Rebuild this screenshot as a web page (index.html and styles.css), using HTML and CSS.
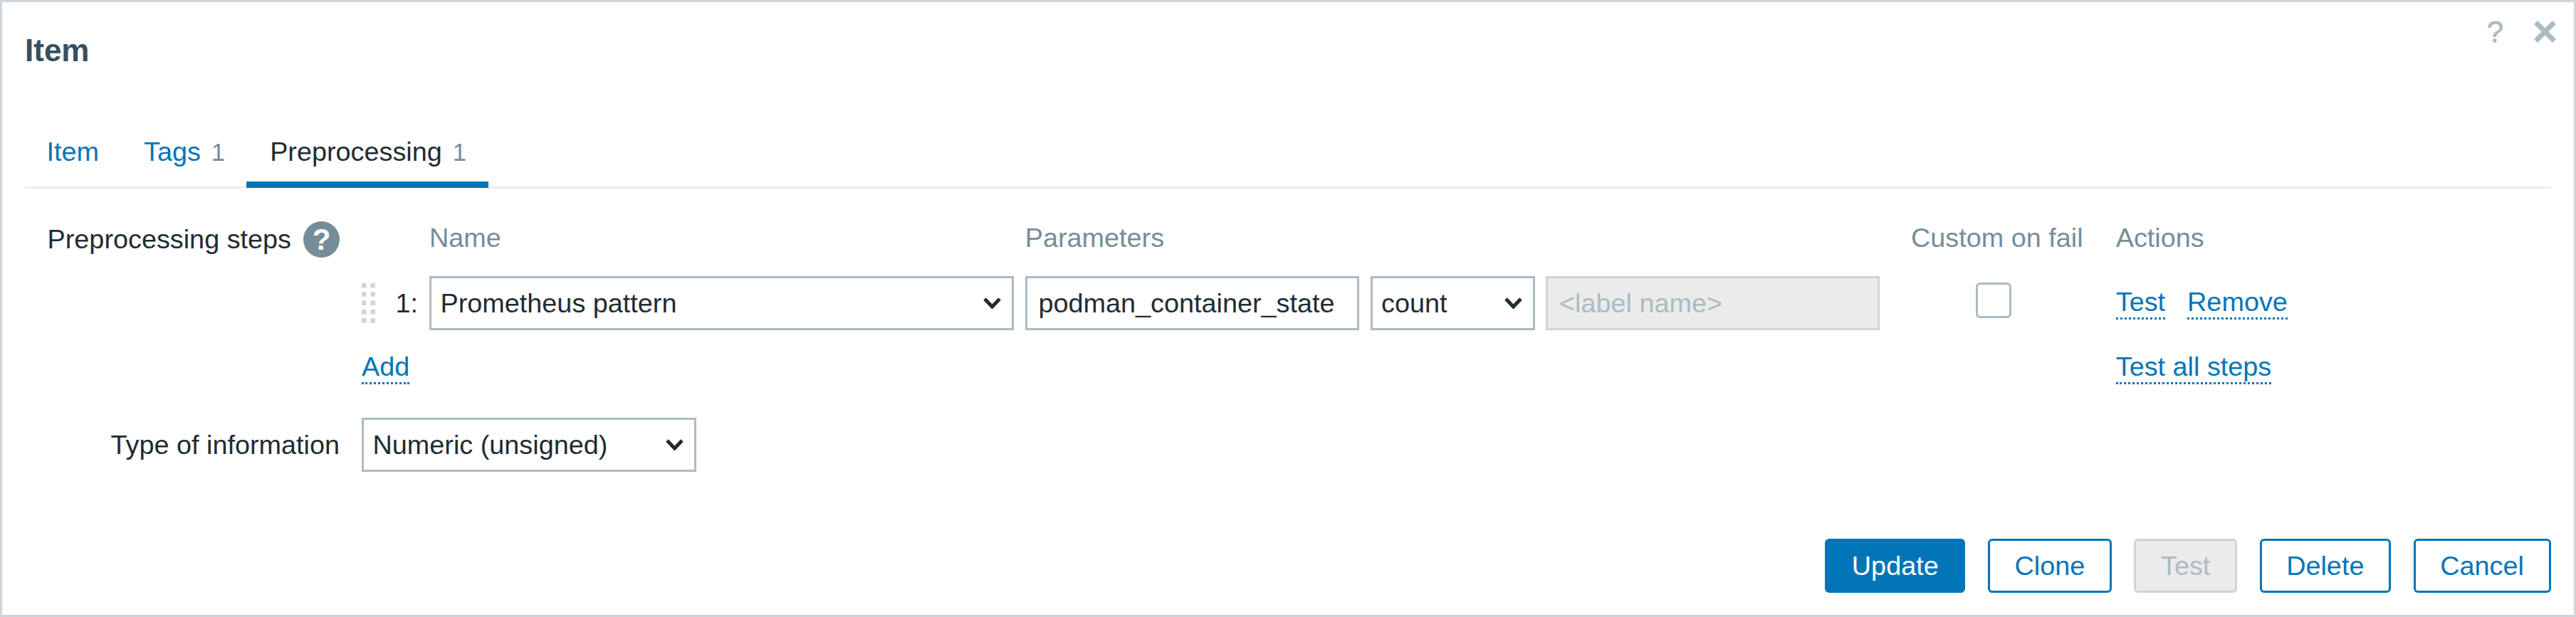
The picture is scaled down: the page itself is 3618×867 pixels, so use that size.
FILE: index.html
```html
<!DOCTYPE html>
<html lang="en">
<head>
<meta charset="utf-8">
<title>Item</title>
<link rel="stylesheet" href="styles.css">
</head>
<body>
<div class="dialog">
  <div class="controls">
    <span class="doc-help">?</span>
    <svg class="close" width="31" height="31" viewBox="0 0 31 31"><path d="M2.5 2.5L28.5 28.5M28.5 2.5L2.5 28.5"/></svg>
  </div>
  <h4 class="title">Item</h4>
  <nav class="tabs">
    <a class="tab">Item</a>
    <a class="tab">Tags<span class="count">1</span></a>
    <a class="tab active">Preprocessing<span class="count">1</span></a>
  </nav>
  <div class="form">
    <div class="label label-top">Preprocessing steps<span class="help">?</span></div>
    <div class="steps">
      <div class="steps-head">
        <span class="head-name">Name</span>
        <span class="head-params">Parameters</span>
        <span class="head-custom">Custom on fail</span>
        <span class="head-actions">Actions</span>
      </div>
      <div class="step">
        <div class="step-index">
          <svg class="drag" width="19" height="56" viewBox="0 0 19 56"><path d="M0 0h6.5v6.5H0zM12.5 0h6.5v6.5h-6.500zM0 12.300h6.500v6.500H0zM12.500 12.300h6.500v6.500h-6.500zM0 24.600h6.500v6.500H0zM12.500 24.600h6.500v6.500h-6.500zM0 36.900h6.500v6.500H0zM12.500 36.900h6.500v6.500h-6.500zM0 49.200h6.500v6.500H0zM12.500 49.200h6.500v6.500h-6.500z"/></svg>
          <span>1:</span>
        </div>
        <div class="select"><span>Prometheus pattern</span><svg class="chev" width="25" height="16" viewBox="0 0 25 16"><path d="M2 2L12.500 13L23 2"/></svg></div>
        <input class="input" type="text" value="podman_container_state">
        <div class="select"><span>count</span><svg class="chev" width="25" height="16" viewBox="0 0 25 16"><path d="M2 2L12.500 13L23 2"/></svg></div>
        <input class="input" type="text" placeholder="&lt;label name&gt;" disabled>
        <div class="custom-cell"><span class="checkbox"></span></div>
        <div class="actions-cell"><a class="link">Test</a><a class="link">Remove</a></div>
      </div>
      <div class="steps-foot">
        <a class="link foot-add">Add</a>
        <a class="link foot-all">Test all steps</a>
      </div>
    </div>
    <div class="label">Type of information</div>
    <div class="select select-type"><span>Numeric (unsigned)</span><svg class="chev" width="25" height="16" viewBox="0 0 25 16"><path d="M2 2L12.500 13L23 2"/></svg></div>
  </div>
  <div class="footer">
    <button class="btn primary">Update</button>
    <button class="btn">Clone</button>
    <button class="btn" disabled>Test</button>
    <button class="btn">Delete</button>
    <button class="btn">Cancel</button>
  </div>
</div>
</body>
</html>
```
FILE: styles.css
```css
* { box-sizing: border-box; }
html, body { margin: 0; padding: 0; background: #fff; }
body {
  font-family: "Liberation Sans", Arial, sans-serif;
  font-size: 37.8px;
  line-height: 47px;
  color: #1f2c33;
}
.dialog {
  position: relative;
  width: 3618px;
  height: 867px;
  border: 3px solid #ccd5d9;
  background: #fff;
  display: flex;
  flex-direction: column;
}
.controls {
  position: absolute;
  top: 26px;
  right: 25px;
  display: flex;
  align-items: flex-start;
  gap: 43px;
}
.doc-help {
  font-size: 42px;
  line-height: 32px;
  color: #acbbc2;
  -webkit-text-stroke: 0.800px #acbbc2;
}
.close path { stroke: #acbbc2; stroke-width: 7; fill: none; }
.title {
  margin: 43px 0 94px 32px;
  font-size: 44px;
  line-height: 50px;
  font-weight: 700;
  color: #374f5d;
}
.tabs {
  display: flex;
  margin: 0 32px 0 31px;
  border-bottom: 3px solid #ebeef0;
}
.tab {
  padding: 0 31.500px 17px;
  border-bottom: 9px solid transparent;
  margin-bottom: -2px;
  color: #0275b8;
}
.tab.active {
  color: #1f2c33;
  border-bottom-color: #0275b8;
  margin-left: -1.500px;
  padding-left: 33px;
  padding-right: 30.500px;
}
.count { font-size: 34.650px; color: #768d99; margin-left: 15px; }
.form {
  display: grid;
  grid-template-columns: 474px 1fr;
  column-gap: 31px;
  row-gap: 47px;
  margin-top: 46px;
  align-items: center;
}
.label { text-align: right; }
.label-top {
  align-self: start;
  display: flex;
  justify-content: flex-end;
  align-items: center;
  gap: 17px;
}
.help {
  width: 51px;
  height: 51px;
  border-radius: 50%;
  background: #768d99;
  color: #fff;
  font-size: 42px;
  font-weight: 700;
  line-height: 51px;
  text-align: center;
}
.steps-head, .step, .steps-foot {
  display: grid;
  grid-template-columns: 79.250px 821px 469px 231px 469px 300px 1fr;
  column-gap: 15.750px;
}
.steps-head { color: #768d99; }
.head-name { grid-column: 2; }
.head-params { grid-column: 3 / span 3; }
.head-custom { grid-column: 6; padding-left: 28px; white-space: nowrap; }
.head-actions { grid-column: 7; }
.step { margin-top: 30px; height: 76px; align-items: center; }
.step-index {
  display: flex;
  justify-content: space-between;
  align-items: center;
  margin-right: -15.750px;
  padding-right: 16px;
}
.drag path { fill: #ccd5d9; }
.select, .input {
  height: 76px;
  border: 3.150px solid #acbbc2;
  background: #fff;
  font: inherit;
  color: inherit;
}
.select {
  display: flex;
  align-items: center;
  justify-content: space-between;
  padding: 0 15px 0 12.500px;
}
.input { width: 100%; padding: 0 15.750px; outline: none; }
.input:disabled { background: #ebebeb; border-color: #ccd5d9; }
.input::placeholder { color: #acbbc2; opacity: 1; }
.chev path { stroke: #1f2c33; stroke-width: 5; fill: none; }
.custom-cell { align-self: start; padding: 9px 0 0 118.500px; }
.checkbox {
  display: block;
  width: 50px;
  height: 50px;
  border: 3.150px solid #acbbc2;
  border-radius: 6px;
  background: #fff;
}
.actions-cell {
  align-self: start;
  padding-top: 14px;
  display: flex;
  gap: 31px;
}
.link {
  color: #0275b8;
  line-height: 44px;
  border-bottom: 3.150px dotted #0275b8;
}
.steps-foot { margin-top: 29px; height: 47px; align-items: start; }
.foot-add { grid-column: 1; justify-self: start; }
.foot-all { grid-column: 7; justify-self: start; }
.select-type { width: 470px; }
.footer {
  margin-top: auto;
  display: flex;
  justify-content: flex-end;
  gap: 31.500px;
  padding: 0 32.500px 31px 0;
}
.btn {
  height: 76px;
  padding: 0 34.650px;
  border: 3.150px solid #0275b8;
  border-radius: 6px;
  background: #fff;
  color: #0275b8;
  font: inherit;
}
.btn.primary { background: #0275b8; color: #fff; }
.btn:disabled { background: #ebebeb; border-color: #ccd5d9; color: #acbbc2; }
```
